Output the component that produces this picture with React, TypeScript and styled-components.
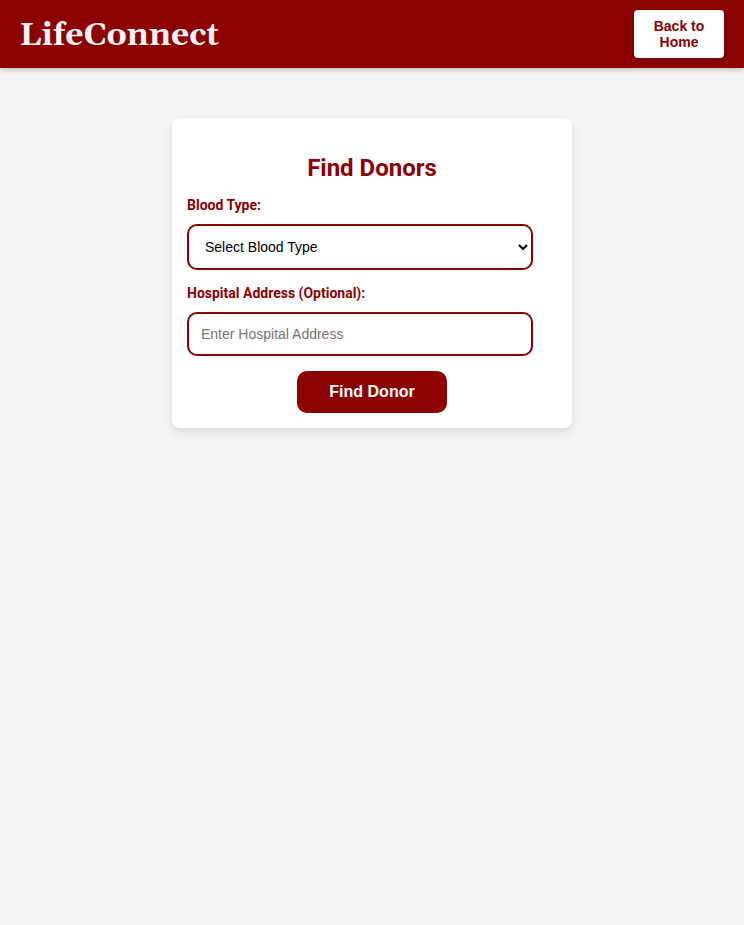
import React from "react";
import styled, { createGlobalStyle } from "styled-components";

const GlobalStyle = createGlobalStyle`
  body {
    margin: 0;
    background: #f4f4f4;
    font-family: Roboto, "Liberation Sans", sans-serif;
  }
`;

const Page = styled.div`
  min-height: 100vh;
`;

const Header = styled.header`
  display: flex;
  align-items: center;
  justify-content: space-between;
  box-sizing: border-box;
  height: 68px;
  padding: 10px 20px;
  background: #8b0000;
  box-shadow: 0 2px 5px rgba(0, 0, 0, 0.2);
`;

const Logo = styled.div`
  padding-top: 2px;
  margin-left: -0.5px;
  color: #f4f4f4;
  font-family: Georgia, Gelasio, "DejaVu Serif", serif;
  font-size: 32px;
  font-weight: bold;
  line-height: 37px;
`;

const HomeButton = styled.button`
  box-sizing: border-box;
  width: 90px;
  height: 48px;
  padding: 8px 15px;
  border: none;
  border-radius: 4px;
  background: #fff;
  color: #8b0000;
  font: bold 14px/16px "Liberation Sans", sans-serif;
  box-shadow: 0 2px 5px rgba(0, 0, 0, 0.2);
`;

const Card = styled.main`
  display: flex;
  flex-direction: column;
  box-sizing: border-box;
  width: 400px;
  height: 310px;
  margin: 50px auto 0;
  padding: 36px 15px 15px;
  border-radius: 8px;
  background: #fff;
  box-shadow: 0 4px 8px rgba(0, 0, 0, 0.1);
`;

const Title = styled.h2`
  margin: 0 0 15px;
  color: #8b0000;
  font-size: 24px;
  line-height: 28px;
  text-align: center;
`;

const Label = styled.label`
  margin-bottom: 10px;
  color: #8b0000;
  font-size: 14px;
  font-weight: bold;
  line-height: 17px;
`;

const Select = styled.select`
  box-sizing: border-box;
  flex: none;
  width: 346px;
  height: 46px;
  margin: 0 0 15px;
  padding: 12px 13px 12px 12px;
  border: 2px solid #8b0000;
  border-radius: 10px;
  background: #fff;
  color: #000;
  font: 14px "Liberation Sans", sans-serif;
`;

const Input = styled.input`
  box-sizing: border-box;
  flex: none;
  width: 346px;
  height: 44px;
  margin: 0 0 15px;
  padding: 12px;
  border: 2px solid #8b0000;
  border-radius: 10px;
  font: 14px "Liberation Sans", sans-serif;
`;

const SubmitButton = styled.button`
  align-self: center;
  flex: none;
  width: 150px;
  height: 42px;
  padding: 0 6px 1px;
  border: none;
  border-radius: 10px;
  background: #8b0000;
  color: #fff;
  font: bold 16px "Liberation Sans", sans-serif;
`;

export default function App() {
  return (
    <Page>
      <GlobalStyle />
      <Header>
        <Logo>LifeConnect</Logo>
        <HomeButton type="button">Back to Home</HomeButton>
      </Header>
      <Card>
        <Title>Find Donors</Title>
        <Label htmlFor="blood-type">Blood Type:</Label>
        <Select id="blood-type">
          <option>Select Blood Type</option>
        </Select>
        <Label htmlFor="hospital">Hospital Address (Optional):</Label>
        <Input id="hospital" placeholder="Enter Hospital Address" />
        <SubmitButton type="button">Find Donor</SubmitButton>
      </Card>
    </Page>
  );
}
